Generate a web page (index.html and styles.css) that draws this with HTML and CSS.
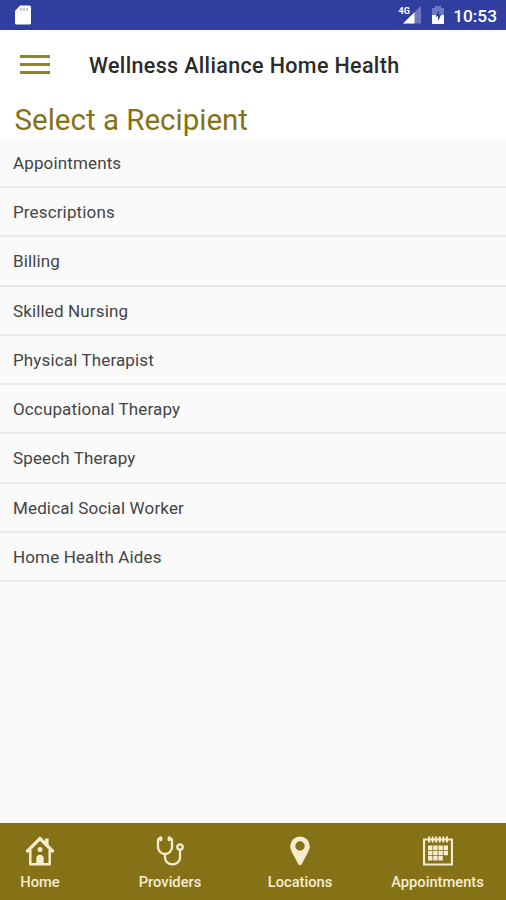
FILE: index.html
```html
<!DOCTYPE html>
<html lang="en">
<head>
  <meta charset="UTF-8" />
  <meta name="viewport" content="width=device-width, initial-scale=1.0"/>
  <title>Wellness Alliance Home Health</title>
  <link rel="stylesheet" href="styles.css">
</head>
<body>
  <div class="status-bar">
    <svg class="sd-card" width="18" height="20" viewBox="0 0 18 20">
      <path d="M6 0.5h9.5a1.500 1.500 0 0 1 1.500 1.500v16a1.500 1.500 0 0 1-1.500 1.500h-13A1.500 1.500 0 0 1 1 18V6z" fill="#fff"/>
      <path d="M7 3v3M10 3v3M13 3v3" stroke="#a3a9d8" stroke-width="1.300"/>
    </svg>
    <div class="status-right">
      <svg class="signal" width="24" height="20" viewBox="0 0 24 20">
        <path d="M23 1v17.500H5z" fill="#7079bf"/>
        <path d="M16.500 7.300v11.200H5z" fill="#fff"/>
        <text x="0.500" y="8.500">4G</text>
      </svg>
      <svg class="battery" width="14" height="20" viewBox="0 0 14 20">
        <path d="M4 1h6v2h3v7H1V3h3z" fill="#7079bf"/>
        <path d="M1 10h12v9H1z" fill="#fff"/>
        <path d="M8 5L4.500 11.500H7V16l3.300-6.500H8z" fill="#303f9f"/>
      </svg>
      <span class="time">10:53</span>
    </div>
  </div>

  <header class="toolbar">
    <button class="menu" aria-label="Menu">
      <span></span>
      <span></span>
      <span></span>
    </button>
    <div class="app-name">Wellness Alliance Home Health</div>
  </header>

  <h1 class="heading">Select a Recipient</h1>

  <ul class="list">
    <li>Appointments</li>
    <li>Prescriptions</li>
    <li>Billing</li>
    <li>Skilled Nursing</li>
    <li>Physical Therapist</li>
    <li>Occupational Therapy</li>
    <li>Speech Therapy</li>
    <li>Medical Social Worker</li>
    <li>Home Health Aides</li>
  </ul>

  <nav class="tabs">
    <a class="tab tab-home">
      <svg width="30" height="30" viewBox="0 0 30 30" fill="none" stroke="#f5ecd0" stroke-width="2.500">
        <path d="M1.500 16L15 2.500 28.500 16" stroke-width="3.200"/>
        <path d="M21.800 9V2.500" stroke-width="3.600"/>
        <path d="M5.300 14v14.300h19.400V14"/>
        <circle cx="15" cy="13.500" r="2.500" fill="#f5ecd0" stroke="none"/>
        <path d="M11.300 29v-6.500a3.700 3.700 0 0 1 7.400 0V29z" fill="#f5ecd0" stroke="none"/>
      </svg>
      <span>Home</span>
    </a>
    <a class="tab">
      <svg width="30" height="30" viewBox="0 0 30 30" fill="none" stroke="#f5ecd0" stroke-width="2.300" stroke-linecap="round">
        <path d="M5.500 2.500H4.500Q3 2.500 3 5v6a7 7 0 0 0 14 0V5q0-2.500-1.500-2.500h-1"/>
        <path d="M10 18v3.500a7.500 6.800 0 0 0 15 0V14"/>
        <circle cx="25" cy="11" r="2.700"/>
        <path d="M5.800 1.900v1.800M14.200 1.900v1.800" stroke-width="3.200"/>
      </svg>
      <span>Providers</span>
    </a>
    <a class="tab">
      <svg width="30" height="30" viewBox="0 0 30 30">
        <path d="M15 .5a9.800 9.800 0 0 0-9.800 9.800c0 3 1.600 5.700 3 8.300l5.100 9.700q1.700 2 3.400 0l5.100-9.700c1.400-2.600 3-5.300 3-8.300A9.800 9.800 0 0 0 15 .5zm0 4.800a4.700 4.700 0 1 1 0 9.400 4.700 4.700 0 0 1 0-9.400z" fill="#f5ecd0"/>
      </svg>
      <span>Locations</span>
    </a>
    <a class="tab">
      <svg width="30" height="30" viewBox="0 0 30 30" fill="none" stroke="#f5ecd0">
        <path d="M1 3.500h28v25H1z" stroke-width="2.200"/>
        <path d="M6 .5v6M9.600 .5v6M13.200 .5v6M16.800 .5v6M20.400 .5v6M24 .5v6" stroke-width="2"/>
        <path d="M5 11.700h20M5 17h20" stroke-width="4.500" stroke-dasharray="4.400 0.800"/>
        <path d="M5 22.300h14.800" stroke-width="4.500" stroke-dasharray="4.400 0.800"/>
      </svg>
      <span>Appointments</span>
    </a>
  </nav>
</body>
</html>
```
FILE: styles.css
```css
:root {
  --gold: #857216;
  --cream: #f5ecd0;
  --blue: #303f9f;
}

* {
  box-sizing: border-box;
}

body {
  margin: 0;
  height: 100vh;
  display: flex;
  flex-direction: column;
  background: #fafafa;
  color: #444;
  font-family: Roboto, sans-serif;
}

.status-bar {
  display: flex;
  align-items: center;
  justify-content: space-between;
  height: 30px;
  padding: 0 9px 0 14px;
  background: var(--blue);
}

.status-right {
  display: flex;
  align-items: center;
}

.signal text {
  font-size: 9px;
  font-weight: 700;
  fill: #fff;
}

.battery {
  margin: 0 8px 0 9px;
}

.time {
  padding-top: 1px;
  font-size: 17.3px;
  font-weight: 500;
  color: #fff;
}

/* Toolbar */
.toolbar {
  display: flex;
  align-items: center;
  height: 70px;
  padding-left: 20px;
  background: #fff;
}

.menu {
  display: flex;
  flex-direction: column;
  gap: 5px;
  width: 30px;
  margin-right: 39px;
  padding: 0 0 1px;
  border: none;
  background: none;
}

.menu span {
  height: 3px;
  background: #948226;
}

.app-name {
  font-size: 21.5px;
  font-weight: 500;
  letter-spacing: 0.35px;
  color: #2b2b2b;
}

.heading {
  height: 40px;
  margin: 0;
  padding-left: 14.5px;
  background: #fff;
  font-size: 29.5px;
  font-weight: 400;
  line-height: 40px;
  color: var(--gold);
}

/* Recipient list */
.list {
  flex: 1;
  margin: 0;
  padding: 0;
  list-style: none;
}

.list li {
  height: 49.25px;
  padding-left: 13px;
  border-bottom: 2px solid #e9e9e9;
  font-size: 17px;
  letter-spacing: 0.14px;
  line-height: 48px;
}

.list li:first-child {
  height: 48px;
  line-height: 46px;
}

/* Bottom tabs */
.tabs {
  display: grid;
  grid-template-columns: 109px 122px 138px 137px;
  height: 77px;
  padding-top: 13px;
  background: var(--gold);
}

.tab {
  display: flex;
  flex-direction: column;
  align-items: center;
  gap: 7px;
  font-size: 14.7px;
  font-weight: 500;
  line-height: 19px;
  color: var(--cream);
}

.tab-home {
  padding-right: 29px;
}
```
